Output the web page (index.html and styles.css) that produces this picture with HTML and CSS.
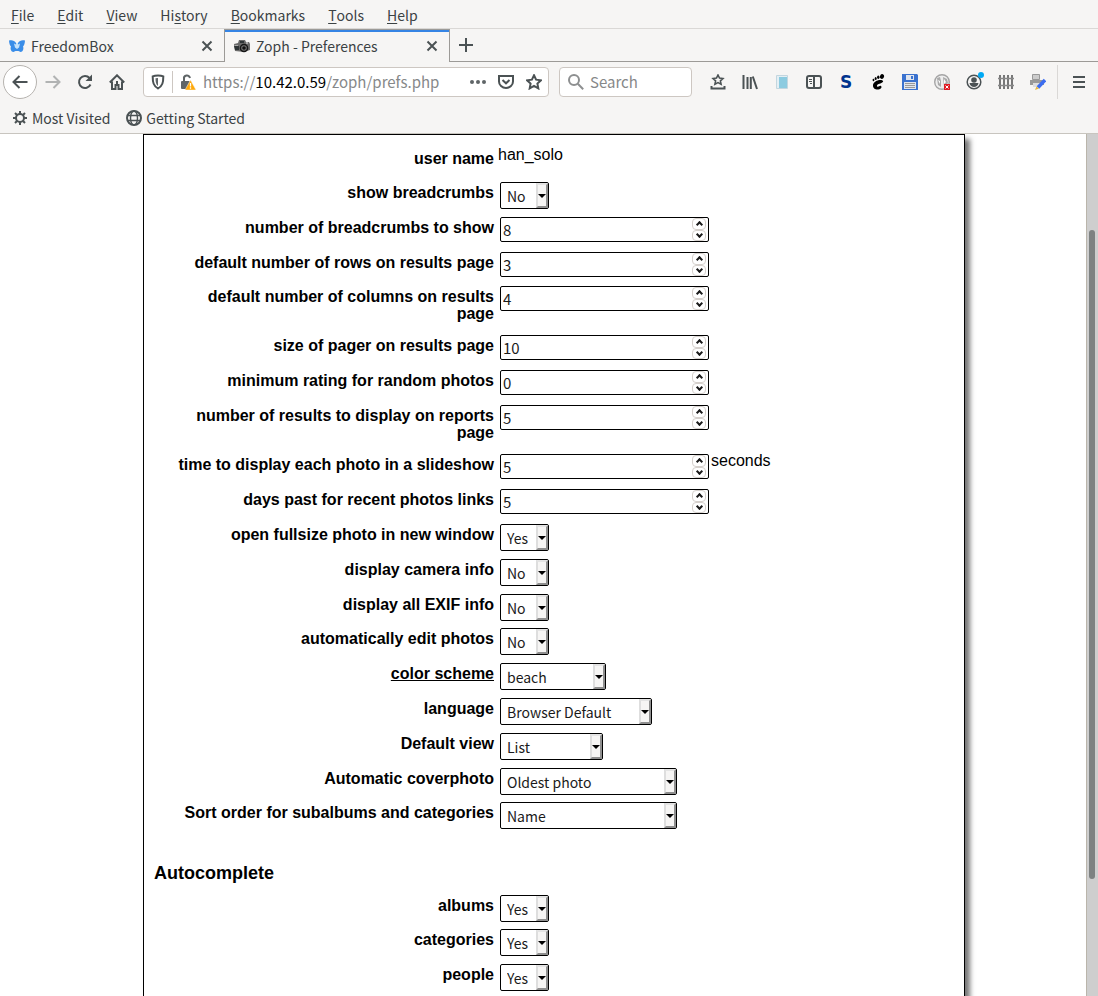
FILE: index.html
```html
<!DOCTYPE html>
<html lang="en">
<head>
<meta charset="utf-8">
<title>Zoph - Preferences</title>
<link rel="stylesheet" href="styles.css">
</head>
<body>
<div class="browser">
  <nav class="menubar" aria-label="Menu">
    <button><u>F</u>ile</button><button><u>E</u>dit</button><button><u>V</u>iew</button><button>Hi<u>s</u>tory</button><button><u>B</u>ookmarks</button><button><u>T</u>ools</button><button><u>H</u>elp</button>
  </nav>

  <div class="tabs">
    <div class="tab">
      <svg class="i16" viewBox="0 0 16 16"><path fill="#3a8de8" d="M0 2.500c3-.8 5.500 0 7 2.500h2c1.500-2.500 4-3.300 7-2.500-.2 3-.8 5-2 6 1 2 0 5.500-2.500 5.500L9.500 13h-3L4.500 14C2 14 1 10.500 2 8.500.800 7.500.2 5.500 0 2.500z"/><path fill="#c5e2fb" d="M5 5.500l2 1V5h2v1.500l2-1-1 4-2 1.500-2-1.500z"/></svg>
      <span class="tab-title">FreedomBox</span>
      <button class="close" aria-label="Close tab"><svg viewBox="0 0 12 12"><path d="M1.500 1.500l9 9m0-9l-9 9"/></svg></button>
    </div>
    <div class="tab active">
      <svg class="i16" viewBox="0 0 16 16"><path fill="#6a6a6a" d="M0 6l4-1 1-3h6l1 2h3l1 2v6l-6 2-9-1z"/><path fill="#2e3436" d="M6 3h4v2H6zM0 8h5v4H1z"/><circle cx="10" cy="10" r="4.300" fill="#161616"/><circle cx="10" cy="10" r="2.800" fill="#777"/><circle cx="10" cy="10" r="1.800" fill="#111"/><path fill="#aaa" d="M12 4h2v2h-2zM1 7h3v1H1z"/></svg>
      <span class="tab-title">Zoph - Preferences</span>
      <button class="close" aria-label="Close tab"><svg viewBox="0 0 12 12"><path d="M1.500 1.500l9 9m0-9l-9 9"/></svg></button>
    </div>
    <button class="new-tab" aria-label="New tab"><svg viewBox="0 0 14 14"><path d="M7 0v14M0 7h14"/></svg></button>
  </div>

  <div class="toolbar">
    <button class="back" aria-label="Back"><svg class="i16 line" viewBox="0 0 16 16"><path d="M15.500 8H1.500M7.500 2L1.500 8l6 6"/></svg></button>
    <button class="tool dim" aria-label="Forward"><svg class="i16 line" viewBox="0 0 16 16"><path d="M.5 8h14M8.500 2l6 6-6 6"/></svg></button>
    <button class="tool" aria-label="Reload"><svg class="i16 line" viewBox="0 0 16 16"><path d="M13.500 10.500A6 6 0 1 1 12.500 4"/><path d="M15 .5V7H8.500z" fill="#4b5254" stroke="none"/></svg></button>
    <button class="tool" aria-label="Home"><svg class="i16 line" viewBox="0 0 16 16"><path d="M.8 8.500L8 1.300l7.200 7.200M3 7.500V15h3.500v-4h3v4H13V7.500"/><path d="M8 7v3"/></svg></button>
    <div class="urlbar">
      <svg class="i16 line" viewBox="0 0 16 16"><path d="M8 1.500c2 0 4 .3 5.300.9 0 6-.8 9.600-5.300 12.100C3.500 12 2.700 8.400 2.700 2.400 4 1.800 6 1.500 8 1.500z"/><path stroke="none" fill="#5f6567" d="M8 4v8C6 10.500 5.500 8 5.500 4.300z"/></svg>
      <span class="rule"></span>
      <svg class="i16" viewBox="0 0 16 16"><path d="M4 8V5a3 3 0 0 1 6-1" fill="none" stroke="#5f6567" stroke-width="2"/><rect x="1" y="7" width="9" height="8" rx="1" fill="#5f6567"/><path d="M10.500 6L16 16H5z" fill="#ffa909" stroke="#f3f3f3" stroke-width=".5"/><path d="M10.500 9v3.500m0 .8v1.400" stroke="#fff" stroke-width="1.300"/></svg>
      <a class="url" href="#prefs">https://<b>10.42.0.59</b>/zoph/prefs.php</a>
      <button class="tool slim" aria-label="Page actions"><svg class="i16" viewBox="0 0 16 16"><g fill="#5f6567"><circle cx="2" cy="8" r="2"/><circle cx="8" cy="8" r="2"/><circle cx="14" cy="8" r="2"/></g></svg></button>
      <button class="tool slim" aria-label="Pocket"><svg class="i16 line" viewBox="0 0 16 16"><path d="M1 2h14v5.500a7 6.500 0 0 1-14 0z"/><path d="M4.500 6L8 9.300 11.500 6"/></svg></button>
      <button class="tool slim" aria-label="Bookmark this page"><svg class="i16 line" viewBox="0 0 16 16"><path d="M8 1.300l2.100 4.400 4.800.6-3.500 3.300.9 4.800L8 12l-4.300 2.400.9-4.800L1.100 6.300l4.800-.6z"/></svg></button>
    </div>
    <label class="search"><svg class="i16" viewBox="0 0 16 16"><g fill="none" stroke="#8d8f90" stroke-width="2"><circle cx="6" cy="6" r="5"/><path d="M9.800 9.800l5.400 5.400"/></g></svg><input type="text" placeholder="Search" aria-label="Search"></label>
    <div class="extras">
      <button class="tool" aria-label="Bookmarks menu"><svg class="i16 line" viewBox="0 0 16 16"><path d="M1.500 12v2.500h13V12"/><path stroke-width="1.600" d="M8 1l1.500 3.100 3.400.4-2.500 2.300.7 3.400L8 8.600l-3.100 1.600.7-3.400-2.500-2.300 3.400-.4z"/></svg></button>
      <button class="tool" aria-label="Library"><svg class="i16 line" viewBox="0 0 16 16"><path d="M1.500 1v14M5.500 3v12M8.800 3v12M10.800 2.500L15 15"/></svg></button>
      <button class="tool" aria-label="Notes"><svg class="i16" viewBox="0 0 16 16"><path fill="#e4eff4" stroke="#c3d6df" d="M2.500 1.500h11v13h-11z"/><path fill="#8ccbe0" d="M5 3h8v11H5z"/></svg></button>
      <button class="tool" aria-label="Sidebars"><svg class="i16 line" viewBox="0 0 16 16"><rect x="1" y="2" width="14" height="12" rx="2"/><path d="M8 2v12"/><path stroke-width="1" d="M3 5.500h3M3 7.500h3M4 9.500h2"/></svg></button>
      <button class="tool letter" aria-label="Stylish">S</button>
      <button class="tool" aria-label="Gnome"><svg class="i16" viewBox="0 0 16 16"><g fill="#000"><ellipse cx="12" cy="2.500" rx="2" ry="2.500" transform="rotate(20 12 2.500)"/><ellipse cx="8.300" cy="3.300" rx="1.200" ry="1.800"/><ellipse cx="5.700" cy="4.500" rx="1" ry="1.500"/><ellipse cx="3.500" cy="6" rx=".9" ry="1.300"/><path d="M12.500 6.500C9 5 3.500 7.500 3 11c-.4 3.500 3 5 5.500 4.500 2.500-.4 3.800-2.500 2.500-3.500-1.300-.8-2 1-3.500.7-1.200-.4-.5-2.200 1.200-2.700 2-.6 6-2 3.800-3.500z"/></g></svg></button>
      <button class="tool" aria-label="Save"><svg class="i16" viewBox="0 0 16 16"><path fill="#3a72cf" d="M0 0h15l1 1v15H0z"/><path fill="#dfe5ee" d="M4 1h8v5H4zM2 8h12v7H2z"/><path fill="#3a72cf" d="M9 2h2v3H9z"/><path stroke="#999" d="M3 9.500h10M3 11.500h10M3 13.500h10"/></svg></button>
      <button class="tool" aria-label="Blocked"><svg class="i16" viewBox="0 0 16 16"><circle cx="8" cy="8" r="7.300" fill="#eee" stroke="#a5a5a5" stroke-width="1.400"/><path fill="#aaa" d="M3 4l3-1 1 4v6l-3-2zM9 3l4 2 1 4-4 4z"/><path fill="#fff" d="M4 6l2 1v3zM10 5l2 3-2 2z"/><path fill="#e01b24" d="M10 10h6v6h-6z"/><path stroke="#fff" d="M11.500 11.500l3 3m0-3l-3 3"/></svg></button>
      <button class="tool" aria-label="Account"><svg class="i20" viewBox="0 0 20 20"><circle cx="10" cy="10" r="6.800" fill="none" stroke="#4b5254" stroke-width="1.500"/><circle cx="10" cy="8" r="2.800" fill="#4b5254"/><path fill="#4b5254" d="M5.500 11h9c-.3 2.500-2.500 4-4.500 4s-4.200-1.500-4.500-4z"/><circle cx="17" cy="3" r="3" fill="#00a9f4"/></svg></button>
      <button class="tool" aria-label="Fence"><svg class="i16" viewBox="0 0 16 16"><path stroke="#777" stroke-width="2" d="M2 1v14M6 1v14M10 1v14M14 1v14"/><path stroke="#888" stroke-width="1.500" d="M0 4.500h16M0 11.500h16"/></svg></button>
      <button class="tool" aria-label="Print edit"><svg class="i16" viewBox="0 0 16 16"><path fill="#ccc" stroke="#999" d="M2.500.5h7v5h-7z"/><path fill="#999" d="M0 6h14v5H0z"/><path fill="#ddd" d="M3 9h7v4H3z"/><path stroke="#3b6cf0" stroke-width="3.500" d="M15 6l-7 7.500"/><path fill="#e3b53c" d="M6.500 12.500l2.500 2L5 16z"/></svg></button>
    </div>
    <span class="rule tall"></span>
    <button class="menu-button" aria-label="Open menu"><svg class="i16 line" viewBox="0 0 16 16"><path d="M2 3h12M2 8h12M2 13h12"/></svg></button>
  </div>

  <div class="bookmarks">
    <a href="#most"><svg class="i16 line" viewBox="0 0 16 16"><circle cx="8" cy="8" r="4"/><path d="M8 1v3M8 12v3M1 8h3M12 8h3M3 3l2 2M11 11l2 2M3 13l2-2M11 5l2-2"/></svg>Most Visited</a>
    <a href="#start"><svg class="i16 line" viewBox="0 0 16 16"><circle cx="8" cy="8" r="7"/><path stroke-width="1.400" d="M1.500 5.500h13M1.500 10.500h13"/><ellipse cx="8" cy="8" rx="3.500" ry="7" stroke-width="1.400"/></svg>Getting Started</a>
  </div>

  <div class="viewport">
    <main class="page" id="prefs">
      <form class="card">
        <div class="group">
          <div class="row"><span class="name">user name</span><div class="field">han_solo</div></div>
        </div>
        <div class="group">
          <div class="row"><label class="name" for="crumbs">show breadcrumbs</label><div class="field"><span class="pick"><select id="crumbs" class="w-bool"><option>No</option><option>Yes</option></select><i></i></span></div></div>
          <div class="row"><label class="name" for="ncrumbs">number of breadcrumbs to show</label><div class="field"><span class="num"><input id="ncrumbs" type="number" value="8"><span class="spin"><button type="button" class="up" aria-label="Increase"></button><button type="button" class="down" aria-label="Decrease"></button></span></span></div></div>
          <div class="row"><label class="name" for="rows">default number of rows on results page</label><div class="field"><span class="num"><input id="rows" type="number" value="3"><span class="spin"><button type="button" class="up" aria-label="Increase"></button><button type="button" class="down" aria-label="Decrease"></button></span></span></div></div>
        </div>
        <div class="group">
          <div class="row"><label class="name" for="cols">default number of columns on results page</label><div class="field"><span class="num"><input id="cols" type="number" value="4"><span class="spin"><button type="button" class="up" aria-label="Increase"></button><button type="button" class="down" aria-label="Decrease"></button></span></span></div></div>
          <div class="row"><label class="name" for="pager">size of pager on results page</label><div class="field"><span class="num"><input id="pager" type="number" value="10"><span class="spin"><button type="button" class="up" aria-label="Increase"></button><button type="button" class="down" aria-label="Decrease"></button></span></span></div></div>
          <div class="row"><label class="name" for="rating">minimum rating for random photos</label><div class="field"><span class="num"><input id="rating" type="number" value="0"><span class="spin"><button type="button" class="up" aria-label="Increase"></button><button type="button" class="down" aria-label="Decrease"></button></span></span></div></div>
          <div class="row"><label class="name" for="reports">number of results to display on reports page</label><div class="field"><span class="num"><input id="reports" type="number" value="5"><span class="spin"><button type="button" class="up" aria-label="Increase"></button><button type="button" class="down" aria-label="Decrease"></button></span></span></div></div>
          <div class="row"><label class="name" for="slide">time to display each photo in a slideshow</label><div class="field"><span class="num"><input id="slide" type="number" value="5"><span class="spin"><button type="button" class="up" aria-label="Increase"></button><button type="button" class="down" aria-label="Decrease"></button></span></span>seconds</div></div>
          <div class="row"><label class="name" for="days">days past for recent photos links</label><div class="field"><span class="num"><input id="days" type="number" value="5"><span class="spin"><button type="button" class="up" aria-label="Increase"></button><button type="button" class="down" aria-label="Decrease"></button></span></span></div></div>
          <div class="row"><label class="name" for="full">open fullsize photo in new window</label><div class="field"><span class="pick"><select id="full" class="w-bool"><option>Yes</option><option>No</option></select><i></i></span></div></div>
          <div class="row"><label class="name" for="camera">display camera info</label><div class="field"><span class="pick"><select id="camera" class="w-bool"><option>No</option><option>Yes</option></select><i></i></span></div></div>
          <div class="row"><label class="name" for="exif">display all EXIF info</label><div class="field"><span class="pick"><select id="exif" class="w-bool"><option>No</option><option>Yes</option></select><i></i></span></div></div>
        </div>
        <div class="group">
          <div class="row"><label class="name" for="auto">automatically edit photos</label><div class="field"><span class="pick"><select id="auto" class="w-bool"><option>No</option><option>Yes</option></select><i></i></span></div></div>
          <div class="row"><label class="name" for="scheme"><a href="#scheme">color scheme</a></label><div class="field"><span class="pick"><select id="scheme" class="w-scheme"><option>beach</option></select><i></i></span></div></div>
          <div class="row"><label class="name" for="lang">language</label><div class="field"><span class="pick"><select id="lang" class="w-lang"><option>Browser Default</option></select><i></i></span></div></div>
          <div class="row"><label class="name" for="view">Default view</label><div class="field"><span class="pick"><select id="view" class="w-view"><option>List</option></select><i></i></span></div></div>
          <div class="row"><label class="name" for="cover">Automatic coverphoto</label><div class="field"><span class="pick"><select id="cover" class="w-wide"><option>Oldest photo</option></select><i></i></span></div></div>
        </div>
        <div class="group">
          <div class="row"><label class="name" for="sort">Sort order for subalbums and categories</label><div class="field"><span class="pick"><select id="sort" class="w-wide"><option>Name</option></select><i></i></span></div></div>
        </div>
        <h2>Autocomplete</h2>
        <div class="group">
          <div class="row"><label class="name" for="albums">albums</label><div class="field"><span class="pick"><select id="albums" class="w-bool"><option>Yes</option><option>No</option></select><i></i></span></div></div>
        </div>
        <div class="group">
          <div class="row"><label class="name" for="cats">categories</label><div class="field"><span class="pick"><select id="cats" class="w-bool"><option>Yes</option><option>No</option></select><i></i></span></div></div>
          <div class="row"><label class="name" for="people">people</label><div class="field"><span class="pick"><select id="people" class="w-bool"><option>Yes</option><option>No</option></select><i></i></span></div></div>
        </div>
      </form>
    </main>
    <div class="scrollbar"><div class="thumb"></div></div>
  </div>
</div>
</body>
</html>
```
FILE: styles.css
```css
* { box-sizing: border-box; }

body {
  margin: 0;
  font: 16px/17px "Liberation Sans", Arial, sans-serif;
  color: #000;
}

button {
  display: flex;
  align-items: center;
  justify-content: center;
  flex: none;
  margin: 0;
  padding: 0;
  border: 0;
  background: none;
  color: inherit;
  font: inherit;
}

a { color: inherit; text-decoration: none; }
svg { display: block; flex: none; }
.i16 { width: 16px; height: 16px; }
.i20 { width: 20px; height: 20px; }
.line { fill: none; stroke: #4b5254; stroke-width: 2; }

.browser {
  display: flex;
  flex-direction: column;
  height: 100vh;
  overflow: hidden;
  background: #f6f5f4;
}

.menubar, .tabs, .toolbar, .bookmarks {
  display: flex;
  flex: none;
  font: 14px/22px "Noto Sans CJK SC", sans-serif;
  color: #3b4244;
}

/* Menu bar */
.menubar {
  gap: 23px;
  height: 29px;
  padding: 1px 11px 0;
  border-bottom: 1px solid #dad8d6;
}
.menubar u { text-underline-offset: 2px; }

/* Tabs */
.tabs { height: 33px; }
.tab {
  display: flex;
  align-items: center;
  gap: 6px;
  width: 224px;
  padding: 1px 11px 0 9px;
  border-bottom: 1px solid #9c9a97;
}
.tab.active {
  width: 226px;
  border: solid #9c9a97;
  border-width: 0 1px;
  box-shadow: inset 0 1px #9c9a97, inset 0 3px #3584e4;
}
.tab-title { flex: 1; }
.close svg { width: 12px; height: 12px; }
.close svg, .new-tab svg { fill: none; stroke: #4b5254; stroke-width: 2; }
.new-tab {
  flex: 1;
  justify-content: flex-start;
  padding-left: 9px;
  border-bottom: 1px solid #9c9a97;
}
.new-tab svg { width: 14px; height: 14px; }

/* Navigation toolbar */
.toolbar {
  align-items: center;
  height: 40px;
  padding: 0 3px;
  font-size: 15px;
}
.tool { width: 32px; height: 32px; }
.slim { width: 28px; }
.dim { opacity: .4; }
.back {
  width: 34px;
  height: 34px;
  border: 1px solid #b6b3af;
  border-radius: 50%;
  background: #fff;
}
.urlbar, .search {
  display: flex;
  align-items: center;
  height: 30px;
  border: 1px solid #cdc7c2;
  border-radius: 4px;
  background: #fff;
}
.urlbar { flex: 1; margin-left: 10px; padding-left: 6px; }
.rule { width: 1px; height: 22px; margin: 0 7px 0 6px; background: #cdc7c2; }
.rule.tall { height: 34px; margin: 0 13px 0 3px; background: #dad8d6; }
.url { flex: 1; margin-left: 7px; color: #868889; white-space: nowrap; }
.url b { color: #000; font-weight: 400; }
.search { width: 133px; margin: 0 10px; padding-left: 8px; }
.search input {
  width: 100px;
  padding: 0 0 0 6px;
  border: 0;
  outline: 0;
  background: none;
  font: inherit;
}
.search input::placeholder { color: #868889; }
.extras { display: flex; }
.letter { font: bold 17px/20px "DejaVu Sans", sans-serif; color: #00338d; }
.menu-button { width: 16px; margin-right: 8px; }

/* Bookmarks bar */
.bookmarks {
  align-items: center;
  gap: 16px;
  height: 32px;
  padding: 0 12px;
  border-bottom: 1px solid #c8c5bf;
}
.bookmarks a { display: flex; align-items: center; gap: 4px; }

/* Page area */
.viewport {
  display: flex;
  flex: 1;
  min-height: 0;
  background: #fff;
}
.page { flex: 1; overflow: hidden; }
.card {
  display: flex;
  flex-direction: column;
  gap: 7px;
  min-height: 100%;
  margin: 0 121px 0 143px;
  padding: 13px 10px;
  border: 1px solid #000;
  background: #fff;
  box-shadow: 5px 5px 5px #777;
}
.group { display: flex; flex-direction: column; gap: 8px; }
.row {
  display: grid;
  grid-template-columns: 320px 1fr;
  column-gap: 4px;
  min-height: 27px;
  padding-left: 20px;
}
.name { padding: 2px 0 5px; font-weight: 700; text-align: right; }
.name a { text-decoration: underline; }
.field { display: flex; align-items: flex-start; line-height: 13px; }
h2 { margin: 27px 0 5px; font-size: 18px; line-height: 20px; }

/* Drop-downs */
.pick, .num { position: relative; display: flex; margin: 0 2px; }
.pick select, .num input {
  appearance: none;
  margin: 0;
  border: 1px solid #000;
  border-radius: 2px;
  background: #fff;
  color: #1a1a1a;
  font: 14px/22px "Noto Sans CJK SC", sans-serif;
}
.pick select { height: 27px; padding: 0 6px; }
.w-bool { width: 49px; }
.w-scheme { width: 106px; }
.w-lang { width: 152px; }
.w-view { width: 103px; }
.w-wide { width: 177px; }
.pick i {
  position: absolute;
  top: 1px;
  right: 1px;
  bottom: 1px;
  display: flex;
  align-items: center;
  justify-content: center;
  width: 12px;
  border: 2px solid;
  border-color: #e4e4e4 #8f8f8f #8f8f8f #dedede;
  background: #f6f5f4;
  pointer-events: none;
}
.pick i::before {
  content: "";
  border: 4px solid transparent;
  border-top-color: #000;
  border-bottom: 0;
}

/* Number boxes */
.num input {
  width: 209px;
  height: 25px;
  padding: 0 18px 0 2px;
  font-size: 15px;
}
.num input::-webkit-inner-spin-button { appearance: none; }
.spin {
  position: absolute;
  top: 1px;
  right: 3px;
  bottom: 1px;
  display: flex;
  flex-direction: column;
  width: 14px;
}
.spin button {
  flex: 1;
  border: 1px solid #d5d0cc;
  border-radius: 4px;
}
.spin button::before {
  content: "";
  box-sizing: border-box;
  width: 5px;
  height: 5px;
  border: solid #1a1a1a;
  border-width: 2px 0 0 2px;
}
.up::before { transform: translateY(1px) rotate(45deg); }
.down::before { transform: translateY(-1px) rotate(225deg); }

/* Scrollbar */
.scrollbar {
  display: flex;
  flex-direction: column;
  width: 12px;
  padding: 96px 3px 117px 2px;
  border-left: 1px solid #bab5ab;
  background: #cecece;
}
.thumb { flex: 1; border-radius: 3px; background: #7e8282; }
```
